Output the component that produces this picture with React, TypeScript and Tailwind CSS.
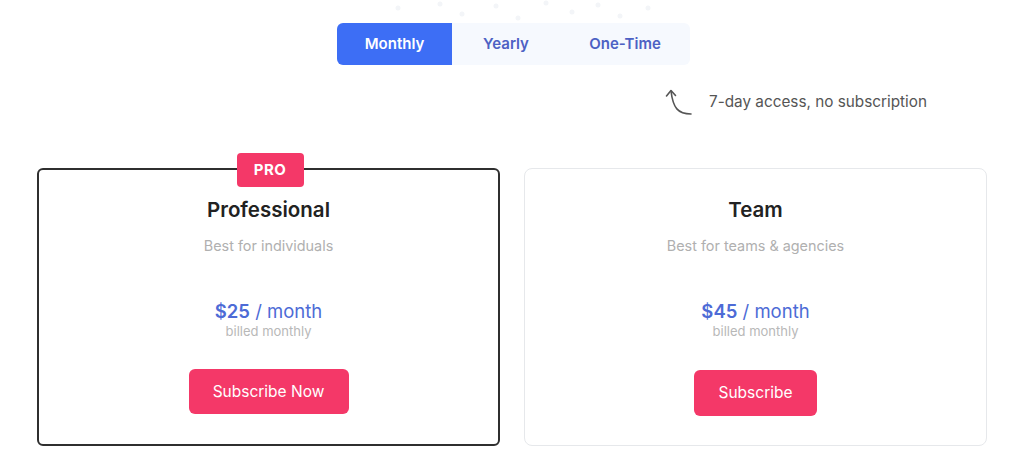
import React, { useState } from "react";

const plans = [
  {
    name: "Professional",
    tagline: "Best for individuals",
    price: "$25",
    cta: "Subscribe Now",
    featured: true,
  },
  {
    name: "Team",
    tagline: "Best for teams & agencies",
    price: "$45",
    cta: "Subscribe",
    featured: false,
  },
];

const tabs = ["Monthly", "Yearly", "One-Time"];

// faint decorative dots above the switcher
const dots = [
  [78, 8], [120, 4], [142, 14], [176, 6], [198, 18], [226, 3], [252, 12], [278, 5], [300, 16], [328, 8],
];

const CurvedArrow = () => (
  <svg width="30" height="30" viewBox="0 0 30 30" fill="none" stroke="#555" strokeWidth="1.6" strokeLinecap="round" strokeLinejoin="round">
    <path d="M26 27 C13 27 8 21 6 4" />
    <path d="M1.5 9 L6 3.5 L10.5 8.5" />
  </svg>
);

export default function App() {
  const [active, setActive] = useState("Monthly");

  return (
    <div className="relative w-full h-[467px] bg-white overflow-hidden" style={{ fontFamily: "Inter, 'Noto Sans', sans-serif" }}>
      <svg className="absolute left-[320px] top-0" width="380" height="24">
        {dots.map(([x, y], i) => (
          <circle key={i} cx={x} cy={y} r="2.5" fill="#f3f5f8" />
        ))}
      </svg>

      <div className="flex flex-col items-center pt-[23px]">
        <div className="flex h-[42px] rounded-[6px] bg-[#f6f9fe] ml-[3px]">
          {tabs.map((t) => (
            <button
              key={t}
              onClick={() => setActive(t)}
              className={
                t === active
                  ? "w-[115px] rounded-[6px] rounded-r-none bg-[#3d6ef5] text-white text-[15px] font-semibold"
                  : t === "Yearly"
                  ? "w-[108px] text-[#4d61c4] text-[15px] font-semibold"
                  : "w-[130px] text-[#4d61c4] text-[15px] font-semibold"
              }
            >
              {t}
            </button>
          ))}
        </div>

        <div className="flex items-center gap-[14px] mt-[22px] ml-[568px]">
          <CurvedArrow />
          <span className="text-[15.3px] text-[#555] whitespace-nowrap">7-day access, no subscription</span>
        </div>
      </div>

      <div className="flex justify-center gap-[24px] mt-[51px]">
        {plans.map((p) => (
          <div
            key={p.name}
            className={
              p.featured
                ? "relative w-[463px] h-[278px] rounded-[6px] border-2 border-[#2f2f2f] flex flex-col items-center pt-[26px]"
                : "relative w-[463px] h-[278px] rounded-[8px] border border-[#e6e8eb] flex flex-col items-center pt-[27px]"
            }
          >
            {p.featured && (
              <div className="absolute top-[-17px] left-1/2 -translate-x-[32px] w-[67px] h-[34px] rounded-[4px] bg-[#f43868] text-white text-[15px] font-bold tracking-[0.5px] flex items-center justify-center">
                PRO
              </div>
            )}
            <h3 className="text-[20.5px] leading-[28px] font-semibold text-[#222]">{p.name}</h3>
            <p className="mt-[12px] text-[14.4px] leading-[20px] text-[#b0b0b0]">{p.tagline}</p>
            <div className="mt-[43px] text-[18.5px] leading-[24px] text-[#4d6bd6]">
              <span className="font-semibold">{p.price}</span> / month
            </div>
            <div className="text-[13px] leading-[16px] text-[#b8b8b8]">billed monthly</div>
            <button
              className={
                p.featured
                  ? "mt-[30px] w-[160px] h-[45px] rounded-[6px] bg-[#f43868] text-white text-[15.5px]"
                  : "mt-[31px] w-[123px] h-[46px] rounded-[6px] bg-[#f43868] text-white text-[15.5px]"
              }
            >
              {p.cta}
            </button>
          </div>
        ))}
      </div>
    </div>
  );
}
